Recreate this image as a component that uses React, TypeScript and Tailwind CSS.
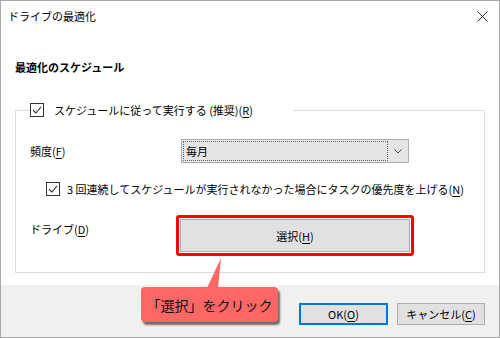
import React from "react";

const U = ({ c }: { c: string }) => (
  <span className="underline underline-offset-2 decoration-1">{c}</span>
);

const CheckBox = () => (
  <span className="w-[14px] h-[14px] border border-[#333333] bg-white flex items-center justify-center shrink-0">
    <svg width="10" height="8" viewBox="0 0 10 8">
      <path d="M1 4.2l2.8 2.8L9 1" fill="none" stroke="#222222" strokeWidth="1.1" />
    </svg>
  </span>
);

const App = () => {
  return (
    <div className="relative w-[500px] h-[338px] border border-[#a8a8a8] bg-white flex flex-col text-[11px] leading-[16px] text-black font-['Noto_Sans_CJK_JP','Noto_Sans',sans-serif]">
      {/* title bar */}
      <div className="h-[30px] flex items-center justify-between pl-[7px] pr-[11px]">
        <span className="text-[11px]">ドライブの最適化</span>
        <svg width="11" height="11" viewBox="0 0 11 11">
          <path d="M0.5 0.5l10 10M10.5 0.5l-10 10" stroke="#333333" strokeWidth="1" />
        </svg>
      </div>

      <div className="px-[14px]">
        <div className="mt-[28px] font-bold">最適化のスケジュール</div>

        <fieldset className="mt-[27px] border border-[#dcdcdc] px-[14px] pb-[16px]">
          <legend className="pr-[40px]">
            <div className="flex items-center gap-[10px] h-[16px]">
              <CheckBox />
              <span>
                スケジュールに従って実行する (推奨)(<U c="R" />)
              </span>
            </div>
          </legend>

          <div className="mt-[21px] flex items-center">
            <span className="w-[151px]">
              頻度(<U c="F" />)
            </span>
            <div className="w-[228px] h-[24px] border border-[#adadad] bg-[#e5e5e5] flex items-center p-[1px]">
              <div className="flex-1 h-[20px] border border-dotted border-[#6a6a6a] flex items-center pl-[2px]">
                毎月
              </div>
              <div className="w-[19px] flex items-center justify-center">
                <svg width="8" height="5" viewBox="0 0 8 5">
                  <path d="M0.5 0.5l3.5 3.5 3.5-3.5" fill="none" stroke="#444444" strokeWidth="1" />
                </svg>
              </div>
            </div>
          </div>

          <div className="mt-[18px] flex items-center gap-[7px] pl-[16px] h-[16px]">
            <CheckBox />
            <span>
              3 回連続してスケジュールが実行されなかった場合にタスクの優先度を上げる(<U c="N" />)
            </span>
          </div>

          <div className="mt-[18px] flex items-start">
            <span className="w-[146px] mt-[6px]">
              ドライブ(<U c="D" />)
            </span>
            <div className="w-[238px] h-[41px] border-[3px] border-[#ff0000] rounded-[3px] bg-white p-[1px]">
              <div className="h-full border border-[#adadad] bg-[#e1e1e1] flex items-center justify-center">
                選択(<U c="H" />)
              </div>
            </div>
          </div>
        </fieldset>
      </div>

      {/* footer */}
      <div className="mt-[12px] flex-1 bg-[#f0f0f0] flex justify-end items-start pt-[18px] pr-[14px] gap-[9px]">
        <div className="w-[89px] h-[22px] border-2 border-[#0078d7] bg-[#e1e1e1] flex items-center justify-center">
          OK(<U c="O" />)
        </div>
        <div className="w-[88px] h-[22px] border border-[#adadad] bg-[#e1e1e1] flex items-center justify-center">
          キャンセル(<U c="C" />)
        </div>
      </div>

      {/* callout */}
      <div className="absolute left-[140px] top-[257px] w-[137px] flex flex-col">
        <svg width="137" height="30" viewBox="0 0 137 30" className="-mb-[1px]">
          <polygon points="80,0 66,30 77,30" fill="#ff6666" />
        </svg>
        <div className="h-[35px] rounded-[4px] bg-[#ff6666] shadow-[2px_3px_2px_rgba(0,0,0,0.55)] flex items-center justify-center text-[14px] leading-[20px] text-[#111111]">
          「選択」をクリック
        </div>
      </div>
    </div>
  );
};

export default App;
